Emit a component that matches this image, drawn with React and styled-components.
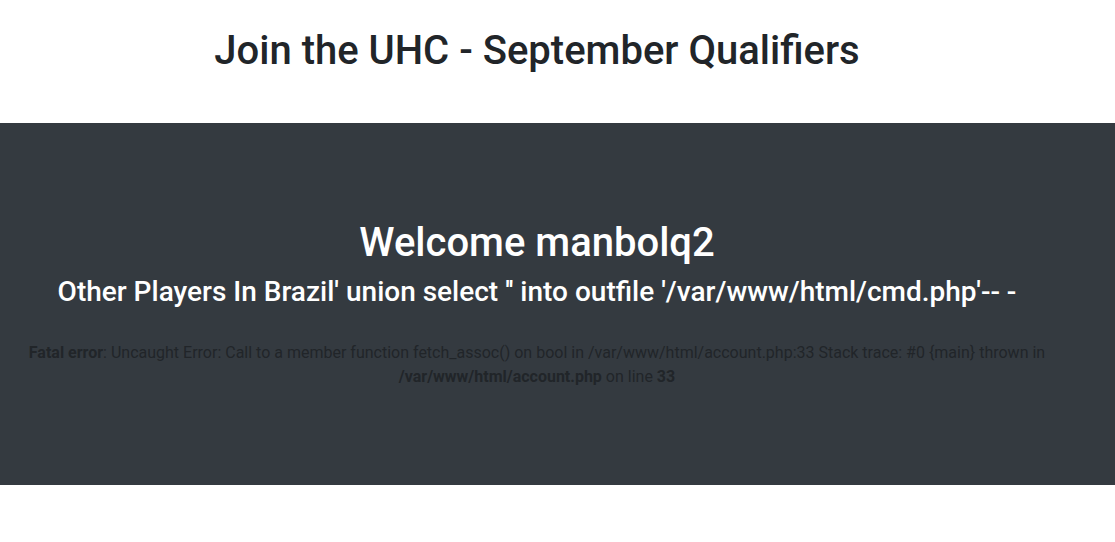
import React from "react";
import styled, { createGlobalStyle } from "styled-components";

const Global = createGlobalStyle`
  html, body { margin: 0; padding: 0; background: #fff; }
  body {
    font-family: Roboto, "Liberation Sans", sans-serif;
    font-size: 16px;
    line-height: 1.5;
    color: #212529;
  }
  * { box-sizing: border-box; }
`;

const Page = styled.div`
  display: flex;
  flex-direction: column;
`;

const Header = styled.header`
  height: 123px;
  display: flex;
  justify-content: center;
  padding: 27px 41px 0 0;
`;

const Title = styled.h1`
  margin: 0;
  font-size: 40px;
  font-weight: 500;
  line-height: 1.2;
  color: #212529;
`;

const Band = styled.section`
  background: #343a40;
  height: 362px;
  padding: 96px 41px 0 0;
  display: flex;
  flex-direction: column;
  align-items: center;
  text-align: center;
`;

const Welcome = styled.h1`
  margin: 0 0 8px;
  font-size: 40px;
  font-weight: 500;
  line-height: 48px;
  color: #fff;
`;

const Sub = styled.h3`
  margin: 0 0 8px;
  font-size: 28px;
  font-weight: 500;
  line-height: 1.2;
  color: #fff;
`;

const ErrorText = styled.p`
  margin: 24px 0 0;
  font-size: 16px;
  line-height: 24px;
  max-width: 1030px;
  color: #212529;
  b { font-weight: 700; }
`;

export default function App() {
  return (
    <>
      <Global />
      <Page>
        <Header>
          <Title>Join the UHC - September Qualifiers</Title>
        </Header>
        <Band>
          <Welcome>Welcome manbolq2</Welcome>
          <Sub>Other Players In Brazil' union select '' into outfile '/var/www/html/cmd.php'-- -</Sub>
          <ErrorText>
            <b>Fatal error</b>: Uncaught Error: Call to a member function fetch_assoc() on bool in /var/www/html/account.php:33 Stack trace: #0 {"{main}"} thrown in <b>/var/www/html/account.php</b> on line <b>33</b>
          </ErrorText>
        </Band>
      </Page>
    </>
  );
}
